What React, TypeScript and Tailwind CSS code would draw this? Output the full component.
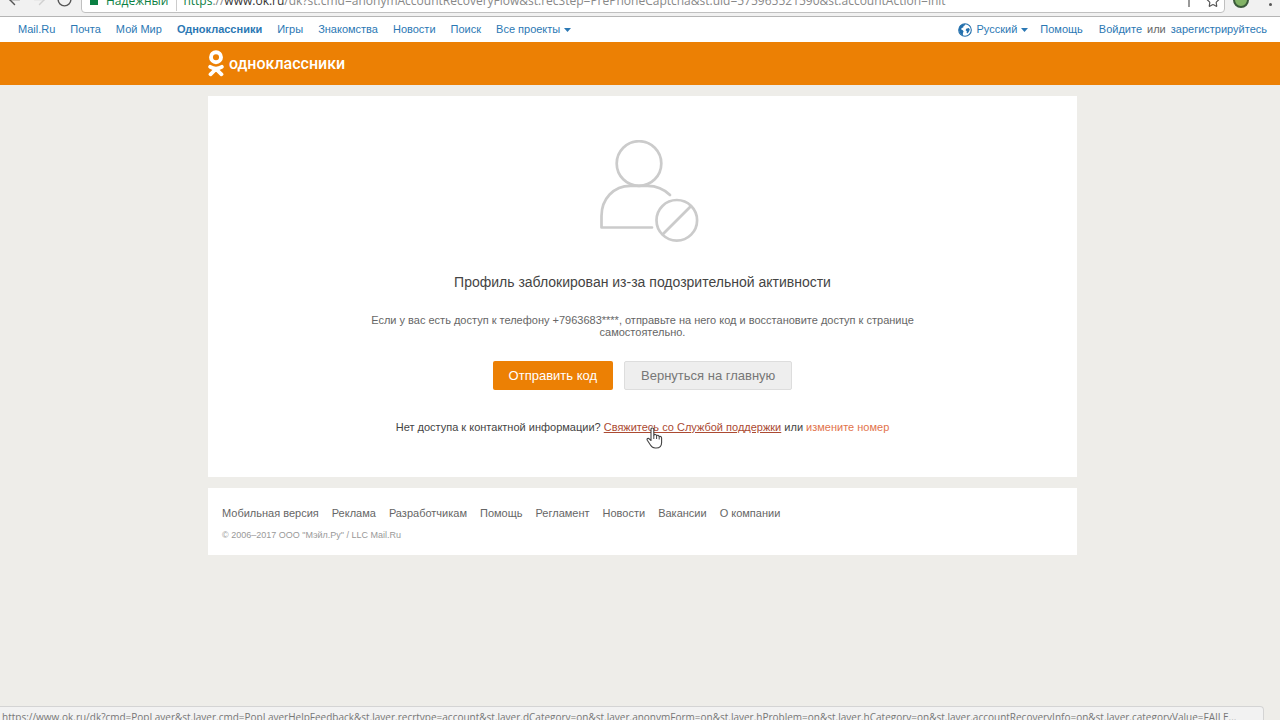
import { ArrowLeft, ArrowRight, RotateCw, Star } from "lucide-react";

const projectLinks = [
  { label: "Mail.Ru" },
  { label: "Почта" },
  { label: "Мой Мир" },
  { label: "Одноклассники", active: true },
  { label: "Игры" },
  { label: "Знакомства" },
  { label: "Новости" },
  { label: "Поиск" },
];

const footerLinks = ["Мобильная версия", "Реклама", "Разработчикам", "Помощь", "Регламент", "Новости", "Вакансии", "О компании"];

function Caret() {
  return (
    <svg width="7" height="4" viewBox="0 0 7 4" className="fill-[#2b78b4]">
      <path d="M0 0h7L3.5 4z" />
    </svg>
  );
}

function Globe() {
  return (
    <svg width="14" height="14" viewBox="0 0 14 14">
      <circle cx="7" cy="7" r="6.3" fill="#fff" stroke="#2470ad" strokeWidth="1.1" />
      <path d="M1 5C2 2 4.500.8 7.400.9L7 2.200 5.600 3 5.200 4.400 3.600 5 3.200 6.400 4.800 7.200 5.600 8.600 4.900 10 4.900 12.600C2.600 11.600 .6 9 1 5z" fill="#2470ad" />
      <path d="M8.200 5.800L10.800 5 11.800 6.400 11 8.400 9.600 10.600 8.600 9.800 8.800 8.200 7.600 7.200z" fill="#2470ad" />
    </svg>
  );
}

function OkLogo() {
  return (
    <svg width="16" height="27" viewBox="0 0 16 27" fill="none" stroke="#fff" strokeLinecap="round" strokeLinejoin="round">
      <circle cx="8" cy="7.2" r="5" strokeWidth="3.9" />
      <path d="M2.200 16.800c3.600 2.200 8 2.200 11.600 0M8 19l-5.500 5.300M8 19l5.500 5.300" strokeWidth="3.8" />
    </svg>
  );
}

function BlockedProfile() {
  return (
    <svg width="114" height="104" viewBox="-14 0 114 104" fill="none" stroke="#cbcbcb" strokeWidth="2.7" strokeLinecap="round" strokeLinejoin="round">
      <circle cx="39" cy="23.5" r="22.3" />
      <path d="M52 87.5H1.500V76C1.500 59 13.500 45.8 30.500 45.800H47.500C57 45.800 64.500 49.500 70 55" />
      <circle cx="76.800" cy="80.300" r="20.300" />
      <path d="M62.800 94.300L90.800 66.300" />
    </svg>
  );
}

function HandCursor() {
  return (
    <svg width="17" height="22" viewBox="0 0 17 22" className="pointer-events-none absolute top-1.5 left-[42px]">
      <path
        d="M5 13.500V2.300C5 .5 7.800.5 7.800 2.300V8.200C8.300 7 10.400 7.200 10.600 8.800 11.200 7.900 13 8.200 13.200 9.700 14 9 15.600 9.500 15.600 11V15.500C15.600 19 13.500 21 10.200 21H9.200C7 21 5.600 20 4.600 18.300L1.300 13.200C.5 11.800 2.200 10.700 3.300 11.800z"
        fill="#fff"
        stroke="#444"
        strokeWidth="1.1"
        strokeLinejoin="round"
      />
      <path d="M7.800 8.200V12M10.600 8.800V12M13.200 9.700V12.500" stroke="#444" strokeWidth="1" />
    </svg>
  );
}

function BrowserBar() {
  return (
    <div className="flex h-[17px] items-end overflow-hidden border-b border-[#b5b5b5] bg-[#f1f1f1] font-['Open_Sans',sans-serif] text-[#555]">
      <div className="flex shrink-0 items-center gap-2 pb-2 pl-1.5">
        <ArrowLeft size={17} />
        <ArrowRight size={17} className="text-[#d0d0d0]" />
        <RotateCw size={17} />
      </div>
      <div className="mb-[3px] ml-2 flex h-6 min-w-0 grow items-center rounded-sm border border-[#c0c0c0] bg-white pr-1 pl-2 text-xs">
        <span className="size-2 shrink-0 bg-[#0b8043]" />
        <span className="ml-2 text-[#0b8043]">Надежный</span>
        <span className="mr-1.5 ml-2 h-5 w-px bg-[#ccc]" />
        <span className="truncate text-[#888]">
          <span className="text-[#0b8043]">https</span>://<span className="text-[#333]">www.ok.ru</span>
          /dk?st.cmd=anonymAccountRecoveryFlow&amp;st.recStep=PrePhoneCaptcha&amp;st.uid=575965521590&amp;st.accountAction=init
        </span>
        <span className="ml-auto h-3 w-0.5 shrink-0 bg-[#999]" />
        <Star size={14} className="ml-4 shrink-0" />
      </div>
      <span className="mb-2 ml-2 size-4 shrink-0 rounded-full border-2 border-[#3b5a3b] bg-[#82b366]" />
      <span className="mr-2 mb-2.5 ml-5 size-[3px] shrink-0 rounded-full bg-[#555]" />
    </div>
  );
}

export default function App() {
  return (
    <div className="min-h-screen bg-[#eeede9] font-['Liberation_Sans',Arial,sans-serif] text-[11px] text-[#666]">
      <BrowserBar />

      {/* Mail.Ru portal links */}
      <nav className="flex h-[25px] items-center justify-between bg-white pr-[13px] pl-[18px] text-[#2b78b4]">
        <div className="flex items-center gap-[15px]">
          {projectLinks.map(link => (
            <a key={link.label} href="#" className={link.active ? "font-bold" : ""}>
              {link.label}
            </a>
          ))}
          <button className="flex items-center gap-1">
            Все проекты <Caret />
          </button>
        </div>
        <div className="flex items-center">
          <button className="mr-3 flex items-center gap-1">
            <Globe />
            Русский <Caret />
          </button>
          <a href="#" className="mr-4">Помощь</a>
          <a href="#">Войдите</a>
          <span className="mx-[5px] text-[#666]">или</span>
          <a href="#">зарегистрируйтесь</a>
        </div>
      </nav>

      <header className="flex h-[43px] items-center bg-[#ec8004] pl-52">
        <a href="#" className="flex items-center gap-[5px] font-['Roboto',sans-serif] text-base font-medium text-white">
          <OkLogo />
          одноклассники
        </a>
      </header>

      <div className="flex flex-col gap-[11px] pt-[11px] pr-[203px] pl-52">
        <main className="flex flex-col items-center bg-white pt-11 pb-[42px] text-center">
          <BlockedProfile />
          <h1 className="mt-7 text-sm leading-5 text-[#444]">Профиль заблокирован из-за подозрительной активности</h1>
          <p className="mt-[22px] max-w-[560px] leading-3">
            Если у вас есть доступ к телефону +7963683****, отправьте на него код и восстановите доступ к странице самостоятельно.
          </p>
          <div className="mt-[23px] flex gap-[11px]">
            <button className="h-[29px] rounded-xs bg-[#ec8004] px-4 text-[13px] font-medium text-white">Отправить код</button>
            <button className="h-[29px] rounded-xs border border-[#ddd] bg-[#eee] px-4 text-[13px] text-[#777]">Вернуться на главную</button>
          </div>
          <p className="mt-[29px] leading-4 text-[#444]">
            Нет доступа к контактной информации?{" "}
            <span className="relative">
              <a href="#" className="text-[#ab4a32] underline">Свяжитесь со Службой поддержки</a>
              <HandCursor />
            </span>{" "}
            или <a href="#" className="text-[#e2734c]">измените номер</a>
          </p>
        </main>

        <footer className="bg-white px-3.5 pt-[17px] pb-3.5">
          <div className="flex flex-wrap gap-x-[13px] leading-4">
            {footerLinks.map(label => (
              <a key={label} href="#">{label}</a>
            ))}
          </div>
          <p className="mt-2 text-[9px] leading-3 text-[#999]">© 2006–2017 ООО "Мэйл.Ру" / LLC Mail.Ru</p>
        </footer>
      </div>

      {/* Link preview at the bottom of the window */}
      <div className="fixed right-4 bottom-0 left-0 h-3.5 overflow-hidden rounded-tr-sm border-t border-r border-[#d4d4d4] bg-[#f2f2f2] font-['Open_Sans',sans-serif] text-[10px] text-[#777]">
        <p className="truncate px-0.5 pt-0.5 leading-4">
          https://www.ok.ru/dk?cmd=PopLayer&amp;st.layer.cmd=PopLayerHelpFeedback&amp;st.layer.recrtype=account&amp;st.layer.dCategory=on&amp;st.layer.anonymForm=on&amp;st.layer.hProblem=on&amp;st.layer.hCategory=on&amp;st.layer.accountRecoveryInfo=on&amp;st.layer.categoryValue=FAILE...
        </p>
      </div>
    </div>
  );
}
